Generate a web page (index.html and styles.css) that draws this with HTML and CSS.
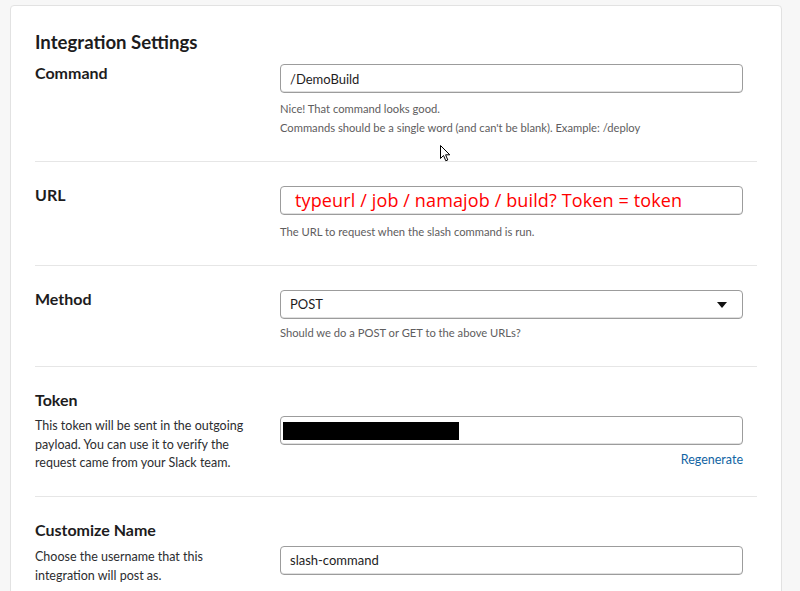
FILE: index.html
```html
<!DOCTYPE html>
<html>
<head>
<meta charset="utf-8">
<link rel="stylesheet" href="styles.css">
</head>
<body>
<div class="card">
  <h2 class="title">Integration Settings</h2>

  <section class="row row--first">
    <div class="left"><h3 class="label">Command</h3></div>
    <div class="right">
      <input class="field" type="text" value="/DemoBuild">
      <p class="help">Nice! That command looks good.</p>
      <p class="help help--tight">Commands should be a single word (and can't be blank). Example: /deploy</p>
    </div>
  </section>

  <section class="row">
    <div class="left"><h3 class="label">URL</h3></div>
    <div class="right">
      <div class="field field--url"><span class="url-text">typeurl / job / namajob / build? Token = token</span></div>
      <p class="help help--url">The URL to request when the slash command is run.</p>
    </div>
  </section>

  <section class="row">
    <div class="left"><h3 class="label">Method</h3></div>
    <div class="right">
      <div class="field field--select"><span>POST</span><span class="caret"></span></div>
      <p class="help help--method">Should we do a POST or GET to the above URLs?</p>
    </div>
  </section>

  <section class="row row--token">
    <div class="left">
      <h3 class="label">Token</h3>
      <p class="desc">This token will be sent in the outgoing payload. You can use it to verify the request came from your Slack team.</p>
    </div>
    <div class="right right--offset">
      <div class="field field--token"><span class="redact"></span></div>
      <div class="regen"><a class="link">Regenerate</a></div>
    </div>
  </section>

  <section class="row row--last">
    <div class="left">
      <h3 class="label">Customize Name</h3>
      <p class="desc desc--name">Choose the username that this integration will post as.</p>
    </div>
    <div class="right right--offset">
      <input class="field" type="text" value="slash-command">
    </div>
  </section>
</div>

<svg class="cursor" width="12" height="18" viewBox="0 0 12 18">
  <path d="M0.5 0.5 L0.5 13.5 L3.5 10.5 L5.8 15.8 L7.8 15 L5.6 9.8 L9.8 9.8 Z" fill="#fff" stroke="#000" stroke-width="1" stroke-linejoin="miter"/>
</svg>
</body>
</html>
```

FILE: styles.css
```css
* { box-sizing: border-box; }
html, body { margin: 0; padding: 0; }
body {
  background: #f7f7f7;
  font-family: Lato, "Open Sans", "Liberation Sans", sans-serif;
  color: #1d1c1d;
  width: 800px;
  height: 591px;
  overflow: hidden;
  position: relative;
}
.card {
  margin: 5px 0 0 10px;
  width: 772px;
  height: 620px;
  background: #fff;
  border: 1px solid #e2e2e2;
  border-radius: 4px;
  padding: 24px 24px 0 24px;
}
.title {
  margin: 0 0 10px 0;
  font-size: 18.6px;
  line-height: 24px;
  font-weight: 700;
}
.row {
  display: grid;
  grid-template-columns: 245px 463px;
  padding: 24px 0 24px 0;
  border-bottom: 1px solid #e6e6e6;
}
.row--first { padding-top: 0; }
.row--token { padding-bottom: 23px; }
.row--last { border-bottom: none; }
.label {
  margin: 0;
  font-size: 16px;
  line-height: 18px;
  font-weight: 700;
}
.left { padding-right: 20px; }
.right--offset { padding-top: 25px; }
.field {
  display: block;
  width: 463px;
  height: 29px;
  border: 1px solid #9c9c9c;
  border-radius: 4px;
  box-shadow: inset 0 -1px 0 #e0e0e0;
  padding: 0 9px;
  font-family: Lato, "Open Sans", sans-serif;
  font-size: 13px;
  color: #1d1c1d;
  background: #fff;
  outline: none;
  line-height: 27px;
}
.field--url {
  padding-left: 14px;
  display: flex;
  align-items: center;
}
.url-text {
  font-family: "Open Sans", "Noto Sans", sans-serif;
  font-size: 18px;
  letter-spacing: 0.13px;
  color: #ff0000;
  line-height: 27px;
}
.field--select {
  display: flex;
  align-items: center;
  justify-content: space-between;
  padding-right: 15px;
}
.caret {
  width: 0; height: 0;
  border-left: 5px solid transparent;
  border-right: 5px solid transparent;
  border-top: 6px solid #111;
}
.field--token {
  padding: 3px 2px;
  display: flex;
  align-items: center;
}
.redact {
  display: block;
  width: 176px;
  height: 18px;
  background: #000;
}
.help {
  margin: 6px 0 0 0;
  font-size: 11.2px;
  line-height: 19px;
  color: #5e5d5e;
}
.help--tight { margin-top: 0; }
.help--url { margin-top: 7px; }
.help--method { margin-top: 4px; }
.desc {
  margin: 8px 0 0 0;
  font-size: 12.5px;
  line-height: 18.5px;
  color: #2c2d30;
}
.desc--name { line-height: 19px; }
.regen {
  text-align: right;
  margin-top: 7px;
  font-size: 12.5px;
  line-height: 16px;
}
.link { color: #1264a3; text-decoration: none; }
.cursor {
  position: absolute;
  left: 440px;
  top: 145px;
}
```
